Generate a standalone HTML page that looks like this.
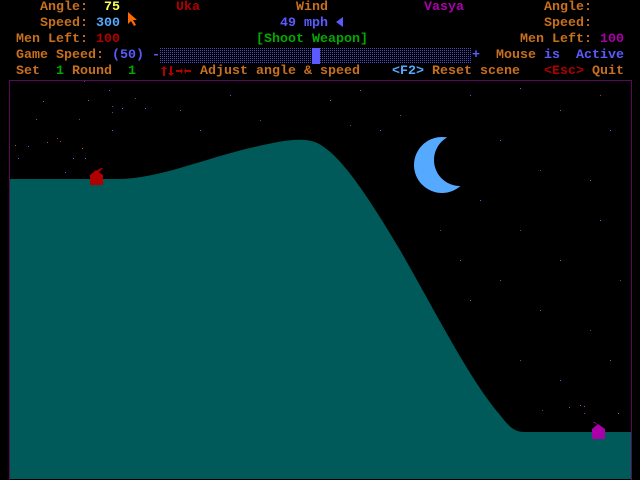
<!DOCTYPE html>
<html><head><style>
html,body{margin:0;padding:0;background:#000;width:640px;height:480px;overflow:hidden}
.t{position:absolute;font-family:"Liberation Mono",monospace;font-size:13.33px;line-height:16px;white-space:pre;font-weight:bold}
.o{color:#c8701e}.y{color:#ffff55}.r{color:#b00000}.b{color:#5a5aff}.lb{color:#55aaff}.g{color:#00aa00}.m{color:#aa00aa}
</style></head><body>
<svg width="640" height="480" style="position:absolute;left:0;top:0">
<defs><pattern id="d" width="2" height="2" patternUnits="userSpaceOnUse"><rect width="1" height="1" fill="#4848c8"/></pattern></defs>
<rect x="9.5" y="80.5" width="622" height="400" fill="none" stroke="#5a0a5a"/>
<g fill="#8040ff">
<rect x="84" y="81" width="1" height="1" fill="#a020a0"/><rect x="109" y="90" width="1" height="1"/><rect x="43" y="101" width="1" height="1" fill="#b06020"/><rect x="88" y="100" width="1" height="1" fill="#b06020"/><rect x="135" y="98" width="1" height="1" fill="#a020a0"/><rect x="112" y="106" width="1" height="1" fill="#a020a0"/><rect x="145" y="108" width="1" height="1" fill="#6060ff"/><rect x="36" y="119" width="1" height="1"/><rect x="79" y="119" width="1" height="1" fill="#a020a0"/><rect x="112" y="112" width="1" height="1" fill="#a020a0"/><rect x="122" y="108" width="1" height="1" fill="#6060ff"/><rect x="47" y="142" width="1" height="1" fill="#b06020"/><rect x="112" y="130" width="1" height="1" fill="#6060ff"/><rect x="57" y="138" width="1" height="1" fill="#a020a0"/><rect x="60" y="141" width="1" height="1" fill="#a020a0"/><rect x="28" y="146" width="1" height="1"/><rect x="15" y="145" width="1" height="1" fill="#b06020"/><rect x="82" y="148" width="1" height="1" fill="#ff3030"/><rect x="73" y="158" width="1" height="1" fill="#6060ff"/><rect x="85" y="158" width="1" height="1" fill="#6060ff"/><rect x="18" y="158" width="1" height="1"/><rect x="65" y="172" width="1" height="1"/>
<rect x="180" y="110" width="1" height="1" fill="#b06020"/><rect x="230" y="95" width="1" height="1"/><rect x="260" y="120" width="1" height="1" fill="#a020a0"/><rect x="330" y="100" width="1" height="1" fill="#6060ff"/><rect x="360" y="90" width="1" height="1" fill="#b06020"/><rect x="400" y="115" width="1" height="1" fill="#a020a0"/><rect x="470" y="95" width="1" height="1"/><rect x="520" y="88" width="1" height="1" fill="#6060ff"/><rect x="560" y="110" width="1" height="1" fill="#b06020"/><rect x="600" y="95" width="1" height="1" fill="#a020a0"/><rect x="610" y="130" width="1" height="1"/><rect x="500" y="140" width="1" height="1" fill="#6060ff"/><rect x="540" y="170" width="1" height="1" fill="#a020a0"/><rect x="590" y="180" width="1" height="1" fill="#b06020"/><rect x="480" y="200" width="1" height="1"/><rect x="520" y="230" width="1" height="1" fill="#a020a0"/><rect x="600" y="220" width="1" height="1" fill="#6060ff"/><rect x="560" y="260" width="1" height="1" fill="#b06020"/><rect x="620" y="280" width="1" height="1" fill="#a020a0"/><rect x="500" y="280" width="1" height="1"/><rect x="540" y="310" width="1" height="1" fill="#6060ff"/><rect x="590" y="330" width="1" height="1" fill="#a020a0"/><rect x="610" y="360" width="1" height="1" fill="#b06020"/><rect x="560" y="380" width="1" height="1"/><rect x="520" y="360" width="1" height="1" fill="#a020a0"/><rect x="580" y="405" width="1" height="1" fill="#b06020"/><rect x="584" y="413" width="1" height="1" fill="#a020a0"/><rect x="569" y="407" width="1" height="1" fill="#6060ff"/><rect x="618" y="413" width="1" height="1" fill="#b06020"/><rect x="542" y="410" width="1" height="1" fill="#a020a0"/><rect x="584" y="406" width="1" height="1"/><rect x="380" y="130" width="1" height="1" fill="#6060ff"/><rect x="350" y="125" width="1" height="1" fill="#a020a0"/><rect x="200" y="130" width="1" height="1" fill="#6060ff"/><rect x="440" y="230" width="1" height="1" fill="#a020a0"/><rect x="460" y="260" width="1" height="1" fill="#6060ff"/><rect x="470" y="300" width="1" height="1" fill="#b06020"/>
</g>
<circle cx="442" cy="165" r="28" fill="#55aaff"/>
<circle cx="460" cy="160" r="26" fill="#000"/>
<path d="M10,179 L120,179 C160,178 200,160 250,148 C280,141 300,137 315,142 C340,152 370,200 400,250 C440,320 470,380 500,415 C510,428 515,432 525,432 L631,432 L631,479 L10,479 Z" fill="#005a5a"/>
<path d="M90,185 L90,175 L96,170 L103,175 L103,185 Z M96,171 L101,168 L103,168 L98,173Z" fill="#b00000"/>
<path d="M592,439 L592,429 L598,424 L605,429 L605,439 Z M598,425 L593,422 L595,422 L600,427Z" fill="#aa00aa"/>
<rect x="160" y="48" width="312" height="16" fill="url(#d)"/>
<rect x="312" y="48" width="8" height="16" fill="#5a5aff"/>
<path d="M128,12 L128,24 L131,21 L134,26 L136,25 L133,20 L137,20 Z" fill="#ff6a00"/>
<path d="M336,22 L343,17 L343,27 Z" fill="#5a5aff"/>
<g fill="#b00000"><path d="M164,66 L167,69 L165,69 L165,76 L163,76 L163,69 L161,69Z"/><path d="M170,66 L172,66 L172,73 L174,73 L171,76 L168,73 L170,73Z"/><path d="M176,70 L181,70 L181,68 L183,71 L181,74 L181,72 L176,72Z"/><path d="M191,70 L186,70 L186,68 L184,71 L186,74 L186,72 L191,72Z"/></g>
</svg>
<div class="t o" style="left:40px;top:0">Angle:</div><div class="t y" style="left:104px;top:0">75</div>
<div class="t r" style="left:176px;top:0">Uka</div><div class="t o" style="left:296px;top:0">Wind</div>
<div class="t m" style="left:424px;top:0">Vasya</div><div class="t o" style="left:544px;top:0">Angle:</div>
<div class="t o" style="left:40px;top:16px">Speed:</div><div class="t lb" style="left:96px;top:16px">300</div>
<div class="t b" style="left:280px;top:16px">49 mph</div><div class="t o" style="left:544px;top:16px">Speed:</div>
<div class="t o" style="left:16px;top:32px">Men Left:</div><div class="t r" style="left:96px;top:32px">100</div>
<div class="t g" style="left:256px;top:32px">[Shoot Weapon]</div>
<div class="t o" style="left:520px;top:32px">Men Left:</div><div class="t m" style="left:600px;top:32px">100</div>
<div class="t o" style="left:16px;top:48px">Game Speed:</div><div class="t b" style="left:112px;top:48px">(50) -</div>
<div class="t b" style="left:472px;top:48px">+</div>
<div class="t o" style="left:496px;top:48px">Mouse</div><div class="t b" style="left:544px;top:48px">is  Active</div>
<div class="t o" style="left:16px;top:64px">Set</div><div class="t g" style="left:56px;top:64px">1</div>
<div class="t o" style="left:72px;top:64px">Round</div><div class="t g" style="left:128px;top:64px">1</div>
<div class="t o" style="left:200px;top:64px">Adjust angle &amp; speed</div>
<div class="t lb" style="left:392px;top:64px">&lt;F2&gt;</div><div class="t o" style="left:432px;top:64px">Reset scene</div>
<div class="t r" style="left:544px;top:64px">&lt;Esc&gt;</div><div class="t o" style="left:592px;top:64px">Quit</div>
</body></html>
